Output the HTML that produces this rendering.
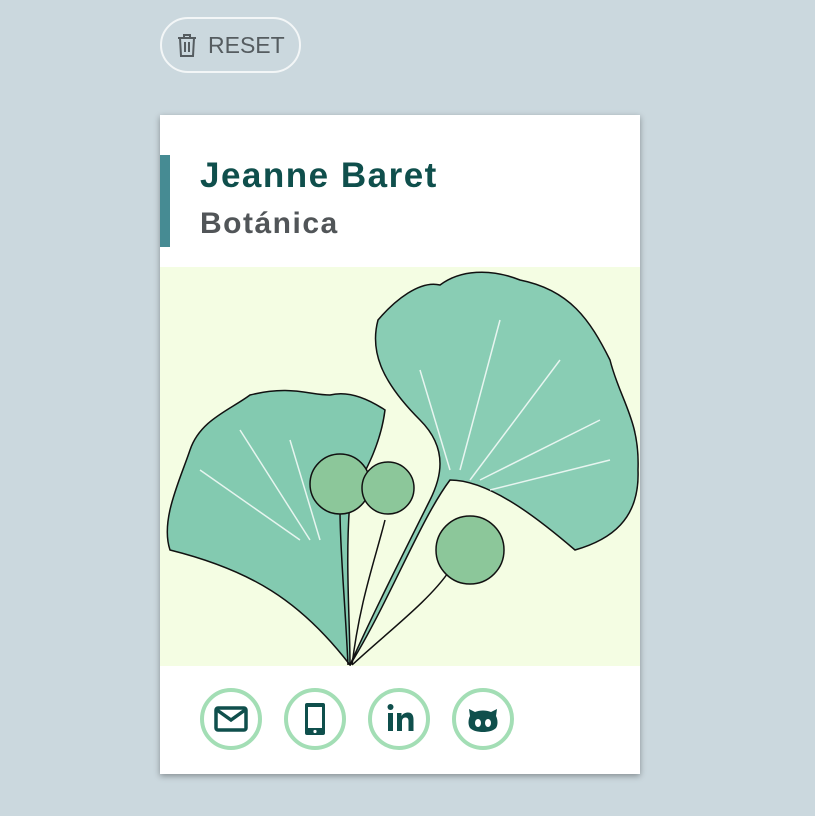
<!DOCTYPE html>
<html><head><style>
body{margin:0;width:815px;height:816px;background:#cbd8de;font-family:"Liberation Sans",sans-serif;position:relative;overflow:hidden;}
.reset{position:absolute;left:160px;top:17px;width:141px;height:56px;border:2px solid #f3f6f7;border-radius:28px;box-sizing:border-box;color:#555c60;font-size:23px;}
.reset span{position:absolute;left:46px;top:13px;}
.card{position:absolute;left:160px;top:115px;width:480px;height:659px;background:#fff;box-shadow:0 2px 6px rgba(0,0,0,.35);}
.bar{position:absolute;left:0;top:40px;width:10px;height:92px;background:#468b93;}
h1{position:absolute;left:40px;top:41px;margin:0;font-size:35px;color:#0f4f4c;font-weight:bold;letter-spacing:1.5px;}
h2{position:absolute;left:40px;top:92px;margin:0;font-size:30px;color:#515558;font-weight:bold;letter-spacing:1.5px;}
.img{position:absolute;left:0;top:152px;width:480px;height:399px;background:#f4fde3;overflow:hidden;}
.ic{position:absolute;top:573px;width:54px;height:54px;border:4px solid #a3deb5;border-radius:50%;}
</style></head><body>
<div class="reset"><svg style="position:absolute;left:15px;top:15px" width="20" height="24" viewBox="0 0 20 24" fill="none" stroke="#555c60" stroke-width="2"><path d="M1 4h18M7 4V1h6v3M3 4l1 18h12l1-18M8 8v10M12 8v10"/></svg><span>RESET</span></div>
<div class="card">
<div class="bar"></div>
<h1>Jeanne Baret</h1>
<h2>Botánica</h2>
<div class="img"><svg width="480" height="399" viewBox="160 267 480 399">
<g stroke="#111" stroke-width="1.5">
<path d="M350 665 C 300 600 250 570 170 550 C 160 520 180 480 190 450 C 200 420 230 410 250 395 C 290 385 310 395 330 395 C 350 390 370 400 385 410 C 380 450 360 480 350 500 C 345 560 350 620 350 665Z" fill="#6ec1a7" fill-opacity=".85"/>
<path d="M350 665 C 390 600 420 520 450 480 C 490 480 540 520 575 550 C 610 540 640 520 638 470 C 640 420 620 400 610 360 C 590 320 570 290 520 280 C 490 268 460 270 440 285 C 420 280 395 300 378 320 C 370 350 380 380 420 420 C 450 450 440 480 430 500 C 400 560 370 620 350 665Z" fill="#6ec1a7" fill-opacity=".8"/>
<path d="M348 665 C 345 600 340 550 340 510 M352 665 C 360 600 375 560 385 520 M352 665 C 390 630 430 600 450 570" fill="none"/>
<circle cx="340" cy="484" r="30" fill="#8cc79a"/>
<circle cx="388" cy="488" r="26" fill="#8cc79a"/>
<circle cx="470" cy="550" r="34" fill="#8cc79a"/>
</g>
<g stroke="#fff" stroke-width="1.5" fill="none" opacity=".8">
<path d="M300 540 L200 470 M310 540 L240 430 M320 540 L290 440 M450 470 L420 370 M460 470 L500 320 M470 480 L560 360 M480 480 L600 420 M490 490 L610 460"/>
</g>
</svg></div>
<div class="ic" style="left:40px"><svg width="54" height="54" viewBox="0 0 54 54"><rect x="12" y="16" width="30" height="22" rx="2" fill="none" stroke="#0f4f4c" stroke-width="3.5"/><path d="M13 18l14 10 14-10" fill="none" stroke="#0f4f4c" stroke-width="3.5"/></svg></div>
<div class="ic" style="left:124px"><svg width="54" height="54" viewBox="0 0 54 54"><rect x="17" y="11" width="20" height="32" rx="2" fill="#0f4f4c"/><rect x="20" y="15" width="14" height="21" fill="#fff"/><circle cx="27" cy="39.5" r="1.6" fill="#fff"/></svg></div>
<div class="ic" style="left:208px"><svg width="54" height="54" viewBox="0 0 54 54"><circle cx="18.5" cy="15" r="3" fill="#0f4f4c"/><rect x="16" y="21" width="5" height="18" fill="#0f4f4c"/><path d="M25 21h4.5v3c1.5-2.5 4-3.5 6.5-3.5 4 0 5.5 3 5.5 7V39h-5V29c0-2-.8-3.5-3-3.5s-3.5 1.5-3.5 4V39h-5z" fill="#0f4f4c"/></svg></div>
<div class="ic" style="left:292px"><svg width="54" height="54" viewBox="0 0 54 54"><path d="M14 36c-2-3-2-8 0-12l-1-7 6 3c5-2 11-2 16 0l6-3-1 7c2 4 2 9 0 12-3 3-8 4-13 4s-10-1-13-4z" fill="#0f4f4c"/><ellipse cx="22" cy="31" rx="3" ry="4" fill="#fff"/><ellipse cx="32" cy="31" rx="3" ry="4" fill="#fff"/></svg></div>
</div>
</body></html>
